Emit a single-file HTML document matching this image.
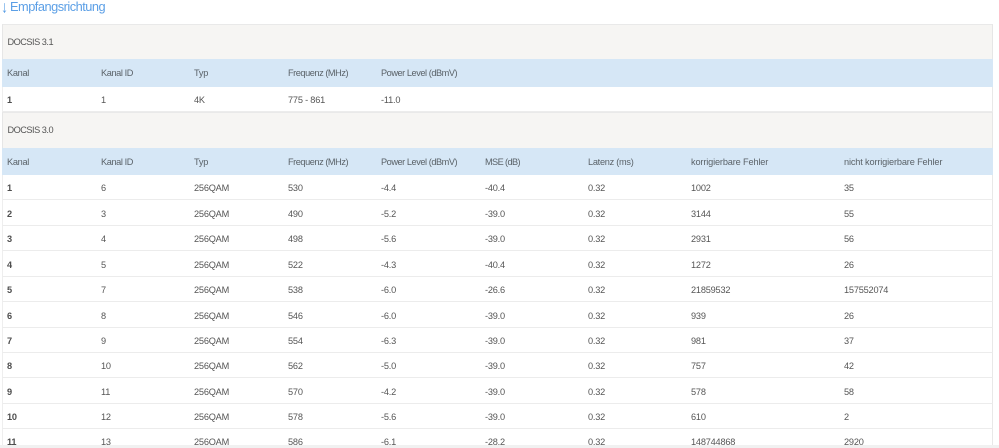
<!DOCTYPE html>
<html lang="de"><head><meta charset="utf-8"><title>Empfangsrichtung</title>
<style>
html,body{margin:0;padding:0;background:#fff}
body{width:999px;height:448px;overflow:hidden;position:relative;font-family:"Liberation Sans",sans-serif;font-size:9.2px;color:#555}
#w{position:absolute;left:0;top:0;width:999px;height:448px;filter:blur(.3px)}
.a{position:absolute;left:1px;top:-3px;font-size:14px;line-height:16px;color:#5b9fe6;transform:scaleY(1.2);transform-origin:top}
.t{position:absolute;left:10px;top:0;font-size:12.8px;line-height:14px;letter-spacing:-.5px;color:#5b9fe6;white-space:nowrap}
.r{position:absolute;left:2px;width:991px;box-sizing:border-box;white-space:nowrap}
.r span{position:absolute;top:50%;transform:translateY(-50%);line-height:12px;letter-spacing:-.2px}
.g{background:#f6f5f3;border-top:1px solid #e9e9e9;border-left:1px solid #e6e6e6;border-right:1px solid #e6e6e6}
.g span{margin-left:-.5px;letter-spacing:-.5px!important}
.h{background:#d6e7f6;color:#5a6268}
.d{border-bottom:1px solid #ececec;border-left:1px solid #eee;border-right:1px solid #e8e8e8}
.d span{margin-left:-1px;margin-top:1px}
.l span{top:13px;margin-top:0}
.c1{left:5px}.c2{left:99px}.c3{left:192px}.c4{left:286px}.c5{left:379px}.c6{left:483px}.c7{left:586px}.c8{left:689px}.c9{left:842px}
.h .c1{letter-spacing:-.3px}.h .c2{letter-spacing:-.4px}.h .c3{letter-spacing:-.2px}.h .c4,.h .c5{letter-spacing:-.45px}.h .c6{letter-spacing:-.6px}.h .c7{letter-spacing:-.27px}.h .c8,.h .c9{letter-spacing:-.15px}
.r b{font-weight:bold;color:#4d4d4d}
</style></head><body><div id="w">
<div class="a">↓</div><div class="t">Empfangsrichtung</div>
<div class="r g" style="top:24px;height:35px"><span class="c1">DOCSIS 3.1</span></div>
<div class="r h" style="top:59px;height:28px"><span class="c1">Kanal</span><span class="c2">Kanal ID</span><span class="c3">Typ</span><span class="c4">Frequenz (MHz)</span><span class="c5">Power Level (dBmV)</span></div>
<div class="r d" style="top:87px;height:25px"><span class="c1"><b>1</b></span><span class="c2">1</span><span class="c3">4K</span><span class="c4">775 - 861</span><span class="c5">-11.0</span></div>
<div class="r g" style="top:112px;height:36px"><span class="c1" style="margin-top:-1px">DOCSIS 3.0</span></div>
<div class="r h" style="top:148px;height:27px"><span class="c1">Kanal</span><span class="c2">Kanal ID</span><span class="c3">Typ</span><span class="c4">Frequenz (MHz)</span><span class="c5">Power Level (dBmV)</span><span class="c6">MSE (dB)</span><span class="c7">Latenz (ms)</span><span class="c8">korrigierbare Fehler</span><span class="c9">nicht korrigierbare Fehler</span></div>
<div class="r d" style="top:175px;height:25px"><span class="c1"><b>1</b></span><span class="c2">6</span><span class="c3">256QAM</span><span class="c4">530</span><span class="c5">-4.4</span><span class="c6">-40.4</span><span class="c7">0.32</span><span class="c8">1002</span><span class="c9">35</span></div>
<div class="r d" style="top:200px;height:26px"><span class="c1"><b>2</b></span><span class="c2">3</span><span class="c3">256QAM</span><span class="c4">490</span><span class="c5">-5.2</span><span class="c6">-39.0</span><span class="c7">0.32</span><span class="c8">3144</span><span class="c9">55</span></div>
<div class="r d" style="top:226px;height:25px"><span class="c1"><b>3</b></span><span class="c2">4</span><span class="c3">256QAM</span><span class="c4">498</span><span class="c5">-5.6</span><span class="c6">-39.0</span><span class="c7">0.32</span><span class="c8">2931</span><span class="c9">56</span></div>
<div class="r d" style="top:251px;height:26px"><span class="c1"><b>4</b></span><span class="c2">5</span><span class="c3">256QAM</span><span class="c4">522</span><span class="c5">-4.3</span><span class="c6">-40.4</span><span class="c7">0.32</span><span class="c8">1272</span><span class="c9">26</span></div>
<div class="r d" style="top:277px;height:25px"><span class="c1"><b>5</b></span><span class="c2">7</span><span class="c3">256QAM</span><span class="c4">538</span><span class="c5">-6.0</span><span class="c6">-26.6</span><span class="c7">0.32</span><span class="c8">21859532</span><span class="c9">157552074</span></div>
<div class="r d" style="top:302px;height:26px"><span class="c1"><b>6</b></span><span class="c2">8</span><span class="c3">256QAM</span><span class="c4">546</span><span class="c5">-6.0</span><span class="c6">-39.0</span><span class="c7">0.32</span><span class="c8">939</span><span class="c9">26</span></div>
<div class="r d" style="top:328px;height:25px"><span class="c1"><b>7</b></span><span class="c2">9</span><span class="c3">256QAM</span><span class="c4">554</span><span class="c5">-6.3</span><span class="c6">-39.0</span><span class="c7">0.32</span><span class="c8">981</span><span class="c9">37</span></div>
<div class="r d" style="top:353px;height:25px"><span class="c1"><b>8</b></span><span class="c2">10</span><span class="c3">256QAM</span><span class="c4">562</span><span class="c5">-5.0</span><span class="c6">-39.0</span><span class="c7">0.32</span><span class="c8">757</span><span class="c9">42</span></div>
<div class="r d" style="top:378px;height:26px"><span class="c1"><b>9</b></span><span class="c2">11</span><span class="c3">256QAM</span><span class="c4">570</span><span class="c5">-4.2</span><span class="c6">-39.0</span><span class="c7">0.32</span><span class="c8">578</span><span class="c9">58</span></div>
<div class="r d" style="top:404px;height:25px"><span class="c1"><b>10</b></span><span class="c2">12</span><span class="c3">256QAM</span><span class="c4">578</span><span class="c5">-5.6</span><span class="c6">-39.0</span><span class="c7">0.32</span><span class="c8">610</span><span class="c9">2</span></div>
<div class="r d l" style="top:429px;height:16px;border-bottom:0;overflow:hidden"><span class="c1"><b>11</b></span><span class="c2">13</span><span class="c3">256QAM</span><span class="c4">586</span><span class="c5">-6.1</span><span class="c6">-28.2</span><span class="c7">0.32</span><span class="c8">148744868</span><span class="c9">2920</span></div>
<div style="position:absolute;left:0;top:445px;width:999px;height:3px;background:#f1f1f1"></div>
</div></body></html>
